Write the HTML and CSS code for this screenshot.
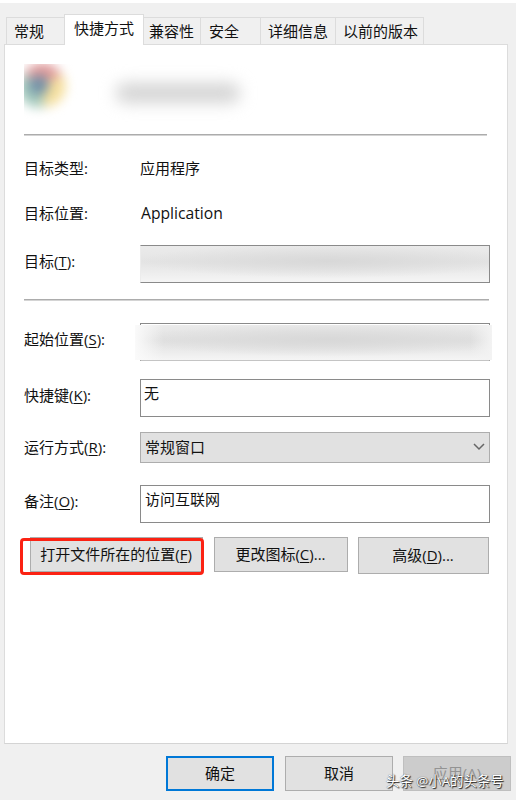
FILE: index.html
```html
<!DOCTYPE html>
<html lang="zh-CN">
<head>
    <meta charset="UTF-8">
    <meta name="viewport" content="width=device-width, initial-scale=1.0">
    <title>属性</title>
    <link rel="stylesheet" href="styles.css">
</head>
<body>
    <div class="dialog">
        <!-- Tabs -->
        <div class="tabs">
            <div class="tab tab-general">常规</div>
            <div class="tab tab-shortcut active">快捷方式</div>
            <div class="tab tab-compat">兼容性</div>
            <div class="tab tab-security">安全</div>
            <div class="tab tab-details">详细信息</div>
            <div class="tab tab-versions">以前的版本</div>
        </div>

        <!-- Shortcut page -->
        <div class="panel">
            <div class="app-header">
                <div class="app-icon">
                    <svg width="56" height="55" viewBox="0 0 56 55">
                        <defs>
                            <filter id="soft" x="-50%" y="-50%" width="200%" height="200%" color-interpolation-filters="sRGB">
                                <feGaussianBlur stdDeviation="5.5"/>
                            </filter>
                        </defs>
                        <g filter="url(#soft)">
                            <path d="M18 22 L0 10 A21 21 0 0 1 38 12 Z" fill="#e09a9a"/>
                            <path d="M18 22 L38 10 A21 21 0 0 1 20 43 Z" fill="#f5df9e"/>
                            <path d="M18 22 L20 43 A21 21 0 0 1 -2 10 Z" fill="#a5cabd"/>
                            <circle cx="15" cy="21" r="10" fill="#7391a8"/>
                        </g>
                    </svg>
                </div>
                <div class="app-name"></div>
            </div>
            <div class="line"></div>

            <div class="row row-type">
                <div class="label">目标类型:</div>
                <div class="value">应用程序</div>
            </div>
            <div class="row row-location">
                <div class="label">目标位置:</div>
                <div class="value latin">Application</div>
            </div>
            <div class="row row-target">
                <div class="label">目标(<u>T</u>):</div>
                <div class="field hidden-text"></div>
            </div>
            <div class="line line-wide"></div>

            <div class="row row-start">
                <div class="label">起始位置(<u>S</u>):</div>
                <div class="field field-start"><div class="field-cover"></div></div>
            </div>
            <div class="row row-key">
                <div class="label">快捷键(<u>K</u>):</div>
                <div class="field field-key">无</div>
            </div>
            <div class="row row-run">
                <div class="label">运行方式(<u>R</u>):</div>
                <div class="select">
                    <span>常规窗口</span>
                    <svg width="12" height="8" viewBox="0 0 12 8">
                        <path d="M1 1 L6 6 L11 1" fill="none" stroke="#666" stroke-width="1.5"/>
                    </svg>
                </div>
            </div>
            <div class="row row-comment">
                <div class="label">备注(<u>O</u>):</div>
                <div class="field">访问互联网</div>
            </div>

            <div class="actions">
                <div class="button open-button">打开文件所在的位置(<u>F</u>)<div class="highlight"></div></div>
                <div class="button icon-button">更改图标(<u>C</u>)...</div>
                <div class="button advanced-button">高级(<u>D</u>)...</div>
            </div>
        </div>

        <!-- Bottom buttons -->
        <div class="footer">
            <div class="button ok">确定</div>
            <div class="button cancel">取消</div>
            <div class="button apply">应用(<u>A</u>)</div>
        </div>
        <div class="watermark">头条 @小A的头条号</div>
    </div>
</body>
</html>
```
FILE: styles.css
```css
* {
    box-sizing: border-box;
}

body {
    margin: 0;
    font-family: "Open Sans", "Noto Sans CJK SC", sans-serif;
    font-size: 15px;
    line-height: 20px;
    color: #111;
    background-color: #fff;
}

u {
    text-decoration-thickness: 1px;
    text-underline-offset: 2px;
}

.dialog {
    position: relative;
    height: 797px;
    margin-top: 3px;
    padding: 11px 0 0 4px;
    background-color: #f0f0f0;
    overflow: hidden;
}

.tabs {
    display: flex;
    align-items: flex-end;
    height: 30px;
    padding-left: 2px;
}

.tab {
    height: 27px;
    padding: 3px 0 0 7px;
    border: 1px solid #dcdcdc;
    border-left: none;
    border-bottom: none;
    white-space: nowrap;
}

.tab-general {
    width: 58px;
    border-left: 1px solid #dcdcdc;
    border-right: none;
}

.tab-shortcut {
    width: 80px;
    padding-left: 9px;
}

.tab-compat {
    width: 57px;
    padding-left: 5px;
}

.tab-security {
    width: 60px;
    padding-left: 8px;
}

.tab-details {
    width: 75px;
}

.tab-versions {
    width: 88px;
}

.tab.active {
    position: relative;
    z-index: 1;
    height: 31px;
    margin-bottom: -1px;
    border-left: 1px solid #dcdcdc;
    background-color: #fff;
}

.panel {
    width: 504px;
    height: 700px;
    padding: 19px 17px 0 19px;
    border: 1px solid #dcdcdc;
    border-bottom-color: #d4d4d4;
    background-color: #fff;
}

.app-header {
    display: flex;
    height: 55px;
}

.app-icon {
    width: 56px;
    height: 55px;
    overflow: hidden;
}

.app-name {
    width: 124px;
    height: 20px;
    margin: 19px 0 0 36px;
    border-radius: 9px;
    background-color: #d4d4d4;
    filter: blur(8px);
}

.line {
    width: 463px;
    height: 2px;
    margin-top: 15px;
    border-top: 1px solid #acacac;
    border-bottom: 1px solid #d4d4d4;
}

.line-wide {
    width: 465px;
    margin-top: 16px;
}

.row {
    display: flex;
    align-items: center;
}

.label {
    flex: none;
    width: 116px;
    white-space: nowrap;
}

.latin {
    padding-left: 1px;
    font-size: 15.7px;
}

.row-type {
    margin-top: 22px;
}

.row-location {
    margin-top: 25px;
}

.row-target {
    margin-top: 22px;
}

.row-target .label,
.row-key .label {
    padding-bottom: 6px;
}

.row-start .label,
.row-comment .label {
    padding-bottom: 7px;
}

.row-run .label {
    padding-bottom: 2px;
}

.row-start {
    margin-top: 22px;
}

.row-key {
    margin-top: 18px;
}

.row-run {
    margin-top: 15px;
}

.row-comment {
    margin-top: 22px;
}

.field {
    width: 350px;
    height: 38px;
    padding: 3px 4px;
    border: 1px solid #8a8a8a;
}

.field-key {
    padding: 3px;
}

.hidden-text {
    border-left-color: #ececec;
    background: radial-gradient(ellipse 190px 17px at 54% 42%, #d8d8d8, rgba(216, 216, 216, 0)),
        linear-gradient(#ebebeb 0%, #e4e4e4 45%, #f5f5f5 100%);
}

.field-start {
    padding: 0;
    border-bottom-color: #c4c4c4;
}

.field-cover {
    width: 357px;
    height: 35px;
    margin: 1px 0 0 -6px;
    background: linear-gradient(90deg, #fafafa 0%, rgba(250, 250, 250, 0) 8%, rgba(255, 255, 255, 0) 94%, #f3f3f3 100%),
        radial-gradient(ellipse 190px 17px at 54% 42%, #d8d8d8, rgba(216, 216, 216, 0)),
        linear-gradient(#ebebeb 0%, #e0e0e0 45%, #f5f5f5 100%);
}

.select {
    display: flex;
    justify-content: space-between;
    align-items: center;
    width: 350px;
    height: 31px;
    padding: 0 4px 1px;
    border: 1px solid #adadad;
    background-color: #e1e1e1;
}

.actions {
    display: flex;
    align-items: flex-start;
    margin: 14px 0 0 6px;
}

.button {
    display: flex;
    justify-content: center;
    align-items: center;
    height: 35px;
    padding: 0 1px 2px 0;
    border: 1px solid #adadad;
    background-color: #e1e1e1;
    white-space: nowrap;
}

.open-button {
    position: relative;
    width: 173px;
}

/* red frame around the first button */
.highlight {
    position: absolute;
    left: -11px;
    top: 0;
    width: 184px;
    height: 37px;
    border: 3px solid #fb2213;
    border-radius: 4px;
}

.icon-button {
    width: 134px;
    margin-left: 11px;
}

.advanced-button {
    width: 131px;
    height: 37px;
    margin-left: 10px;
}

.footer {
    display: flex;
    gap: 11px;
    padding: 12px 0 0 162px;
}

.footer .button {
    width: 108px;
    padding: 0 0 1px;
}

.footer .ok {
    border: 2px solid #0078d7;
}

.footer .apply {
    margin-left: -1px;
    border-color: #bfbfbf;
    background-color: #ccc;
    color: #939393;
}

.watermark {
    position: absolute;
    left: 386px;
    top: 768px;
    font-size: 13.4px;
    color: #fff;
    text-shadow: 1px 1px 1px #222, 0 0 1px #444;
    white-space: nowrap;
}
```
